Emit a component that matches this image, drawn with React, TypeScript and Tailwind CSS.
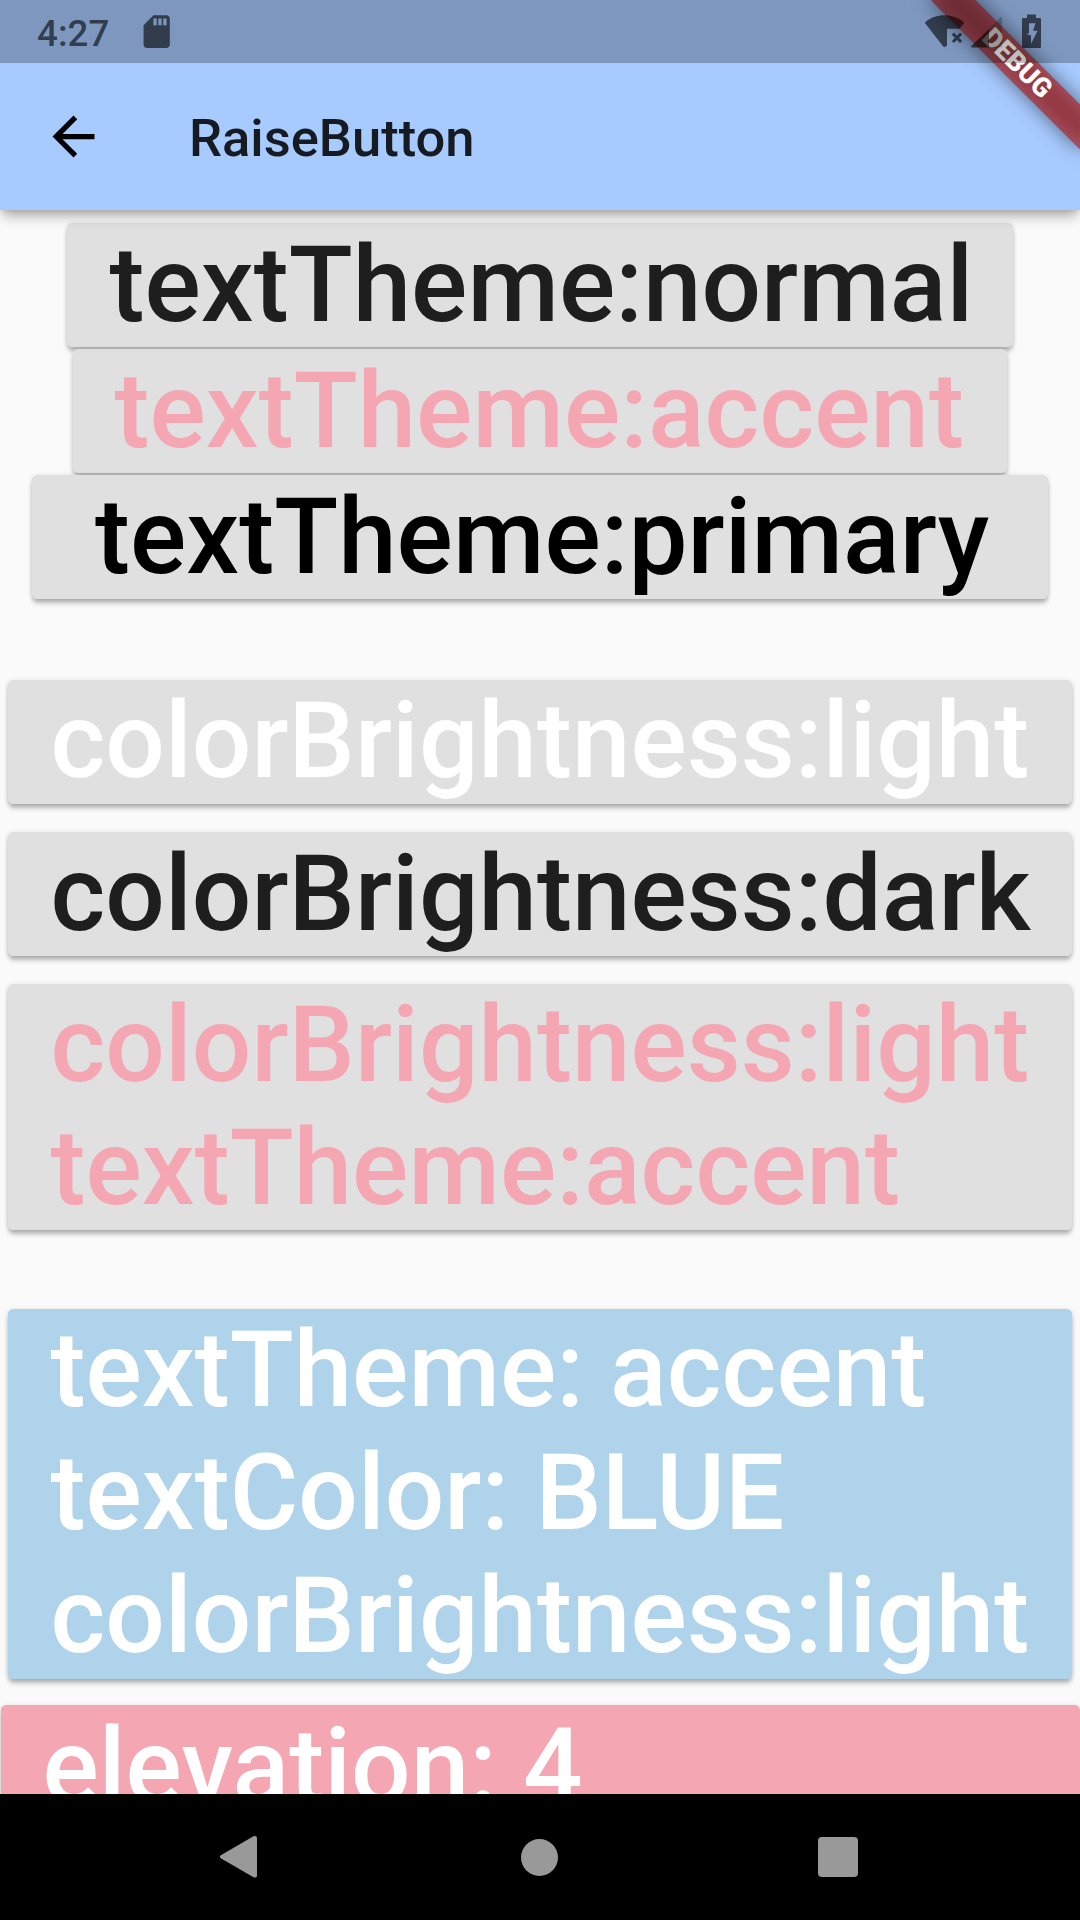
import type { ReactNode } from "react";

const STATUS_ICON = "fill-black/60";

function StatusBar() {
  return (
    <div className="relative z-20 flex h-[63px] items-center bg-black/25">
      <span className="mt-[3px] ml-[37px] text-[36.75px] leading-[43px] font-medium text-black/60">4:27</span>
      <svg className={`${STATUS_ICON} ml-[27.5px] size-[39.4px]`} viewBox="0 0 24 24">
        <path d="M18 2h-8L4 8v12c0 1.1.9 2 2 2h12c1.1 0 2-.9 2-2V4c0-1.1-.9-2-2-2zm-6 6h-2V4h2v4zm3 0h-2V4h2v4zm3 0h-2V4h2v4z" />
      </svg>
      <div className="mr-[39px] ml-auto flex h-[36px] items-start">
        <svg className={STATUS_ICON} width="40" height="36" viewBox="0 0 40 36">
          <path d="M.3 9.5C-.1 9 0 8.200.7 7.700 5.700 3.500 12.300 1.300 19.500 1.300S33.300 3.500 38.400 7.700C39.100 8.200 39.200 9 38.700 9.600L34.500 14.700H22V31.200L20.900 32.400C20.200 33.200 19 33.200 18.300 32.400Z" />
          <path d="M28.900 18.600 32 21.700 35.100 18.600 37.200 20.700 34.100 23.800 37.200 26.900 35.100 29 32 25.900 28.900 29 26.800 26.900 29.900 23.800 26.800 20.700Z" />
        </svg>
        <svg className="ml-[6px]" width="31" height="36" viewBox="0 0 31 36">
          <path className="fill-black/60" d="M18 15V33.500H1C0 33.500-.2 32.800.4 32Z" />
          <path className="fill-black/20" d="M18 15 29.500 3.300C30.200 2.600 31 2.900 31 3.900V32.200C31 33 30.500 33.500 29.700 33.500H18Z" />
        </svg>
        <svg className={`${STATUS_ICON} ml-[20px]`} width="19" height="36" viewBox="0 0 19 36">
          <path fillRule="evenodd" d="M5 .5H14V4H17.500C18.500 4 19 4.700 19 5.500V32.500C19 33.500 18.500 34 17.500 34H1.500C.5 34 0 33.500 0 32.500V5.500C0 4.500.5 4 1.500 4H5ZM7 9.200V19.500H5.500V21H9V30L15.500 16.800H11L13.500 9.200Z" />
        </svg>
      </div>
    </div>
  );
}

function DebugBanner() {
  return (
    <div className="pointer-events-none absolute top-0 right-0 z-10 h-[210px] w-[240px] overflow-hidden">
      <div className="absolute top-[73.5px] left-[135px] h-[31.5px] w-[210px] origin-[105px_-73.5px] rotate-45">
        <div className="absolute inset-0 bg-black/50 blur-[10px]" />
        <div className="relative flex h-full items-center justify-center bg-[#b71c1c]/63">
          <span className="text-[26.8px] leading-[31.5px] font-black text-white">DEBUG</span>
        </div>
      </div>
    </div>
  );
}

function Header() {
  return (
    <header className="relative z-10 h-[210px] shrink-0 bg-[#a7caff] shadow-[0_9px_12px_-3px_rgba(0,0,0,0.3),0_2px_6px_-1px_rgba(0,0,0,0.12)]">
      <StatusBar />
      <div className="flex h-[147px] items-center pl-[42px]">
        <svg className="size-[63px] fill-black" viewBox="0 0 24 24">
          <path d="M20 11H7.830l5.590-5.590L12 4l-8 8 8 8 1.410-1.410L7.830 13H20v-2z" />
        </svg>
        <h1 className="mt-[2px] ml-[84px] text-[52.5px] leading-[62px] font-medium text-black/87">RaiseButton</h1>
      </div>
      <DebugBanner />
    </header>
  );
}

function RaisedButton({ className, children }: { className: string; children: ReactNode }) {
  return (
    <button
      className={`block shrink-0 rounded-[5.25px] text-left text-[105px] leading-[123px] font-medium tracking-[0.05px] whitespace-pre shadow-[0_5px_5px_-1px_rgba(0,0,0,0.25),0_1px_5px_rgba(0,0,0,0.15)] ${className}`}
    >
      {children}
    </button>
  );
}

function NavigationBar() {
  return (
    <nav className="relative z-10 flex h-[126px] shrink-0 items-center bg-black pl-[218px]">
      <svg className="fill-[#999999]" width="42" height="44" viewBox="0 0 42 44">
        <path d="M2.800 20.300 35.500 1.300C37 .5 39 1.200 39 3V40.500C39 42.500 37 43 35.500 42.200L2.800 23.300C1.600 22.500 1.600 21 2.800 20.300Z" />
      </svg>
      <div className="ml-[261px] size-[37px] rounded-full bg-[#999999]" />
      <div className="ml-[260px] size-[40px] rounded-[4px] bg-[#999999]" />
    </nav>
  );
}

export default function App() {
  return (
    <div className="flex h-[1920px] w-[1080px] flex-col overflow-hidden bg-[#fafafa] font-['Roboto',sans-serif]">
      <Header />
      <main className="flex min-h-0 flex-1 flex-col items-center overflow-hidden pt-[13px]">
        <RaisedButton className="h-[124px] w-[946px] bg-[#e0e0e0] px-[42.5px] text-[#1e1e1e]">textTheme:normal</RaisedButton>
        <RaisedButton className="mt-[2px] h-[124px] w-[934px] bg-[#e0e0e0] px-[41.5px] text-[#f4a7b3]">textTheme:accent</RaisedButton>
        <RaisedButton className="mt-[2px] h-[124px] w-[1016px] bg-[#e0e0e0] px-[63px] text-black">textTheme:primary</RaisedButton>
        <RaisedButton className="mt-[81px] h-[124px] w-[1064px] bg-[#e0e0e0] px-[42.5px] pb-[1px] text-white">colorBrightness:light</RaisedButton>
        <RaisedButton className="mt-[28px] h-[124px] w-[1064px] bg-[#e0e0e0] px-[42.5px] text-[#1e1e1e]">colorBrightness:dark</RaisedButton>
        <RaisedButton className="mt-[28px] h-[246px] w-[1064px] bg-[#e0e0e0] px-[42.5px] text-[#f4a7b3]">{"colorBrightness:light\ntextTheme:accent"}</RaisedButton>
        <RaisedButton className="mt-[79px] h-[370px] w-[1064px] bg-[#afd3eb] px-[42.5px] pb-[1px] text-white">{"textTheme: accent\ntextColor: BLUE\ncolorBrightness:light"}</RaisedButton>
        <RaisedButton className="mt-[26px] h-[124px] w-[1079px] bg-[#f4a7b3] px-[42px] text-white">elevation: 4</RaisedButton>
      </main>
      <NavigationBar />
    </div>
  );
}
